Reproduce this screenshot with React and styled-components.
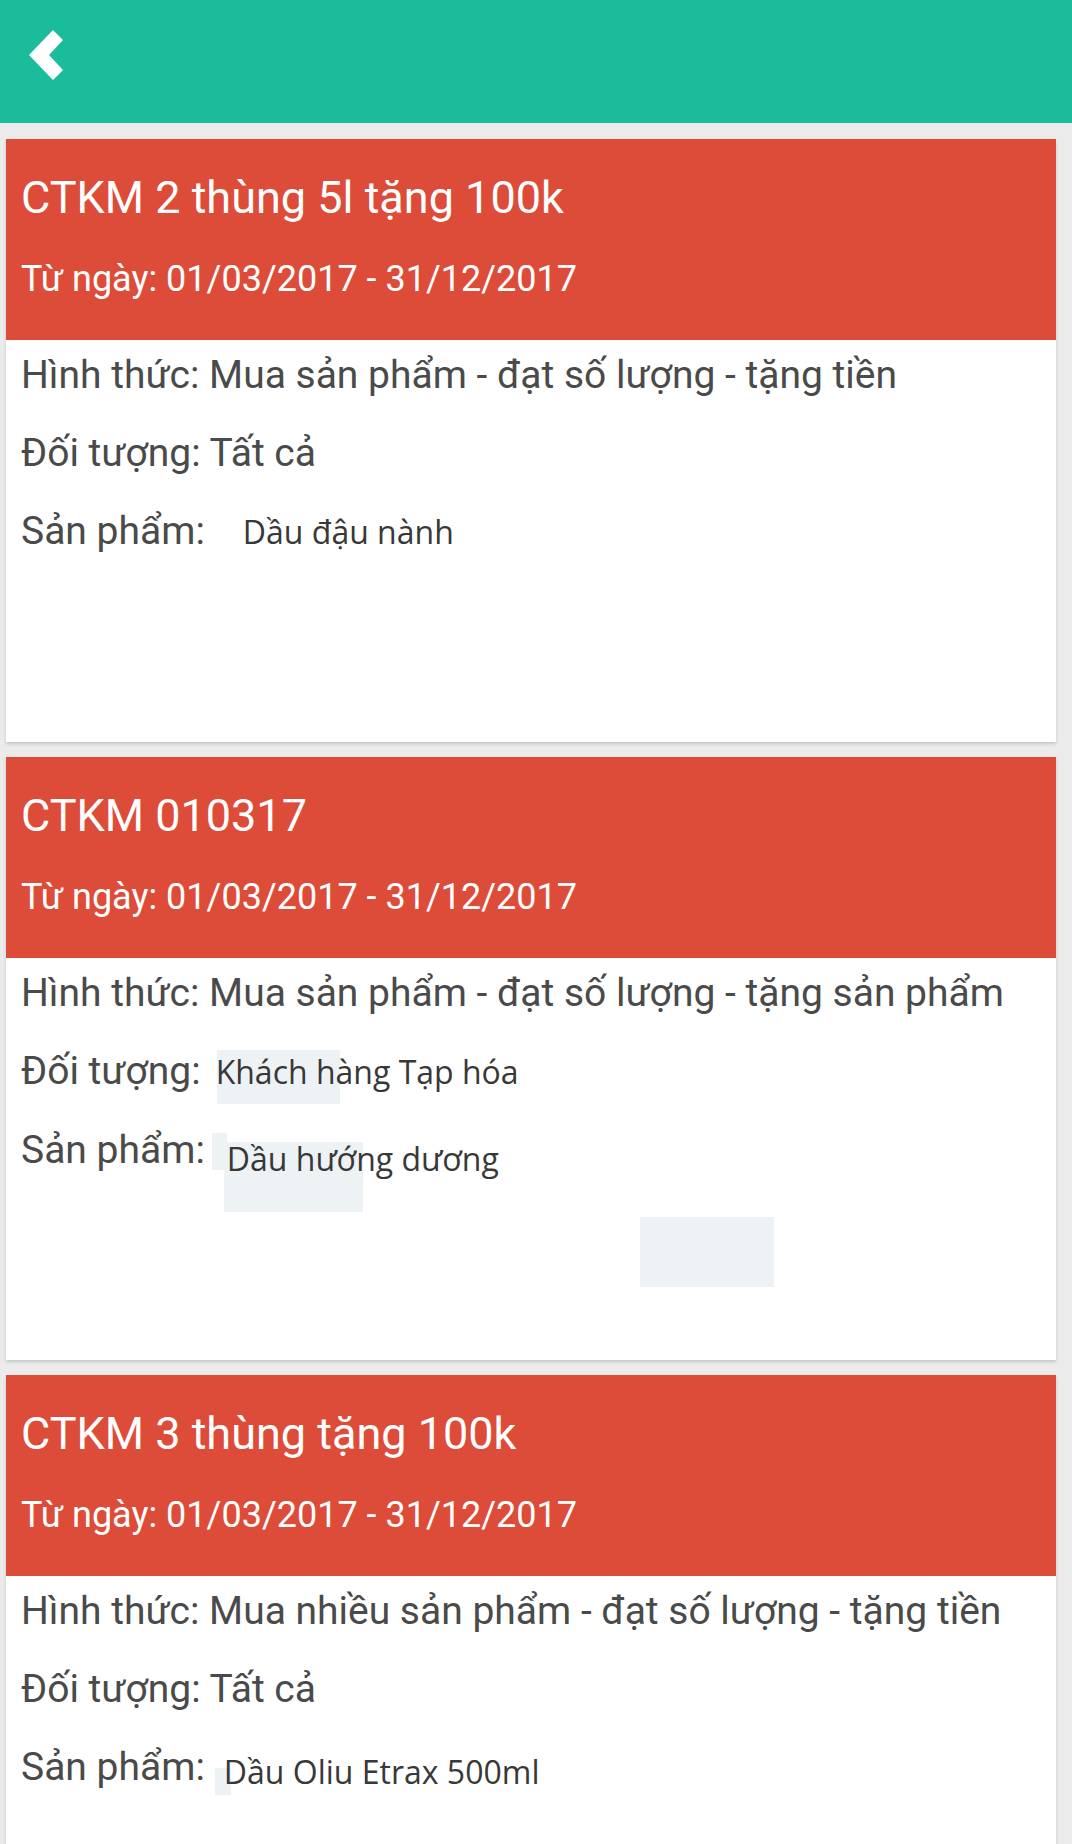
import React from 'react';
import styled, { createGlobalStyle } from 'styled-components';

const GlobalStyle = createGlobalStyle`
  html, body { margin: 0; padding: 0; }
  body {
    background: #ebebeb;
    font-family: Roboto, "Liberation Sans", sans-serif;
  }
`;

const Page = styled.div`
  width: 1072px;
  height: 1844px;
  background: #ebebeb;
  overflow: hidden;
`;

const TopBar = styled.header`
  height: 123px;
  background: #1bbc9b;
  display: flex;
  align-items: center;
  padding: 0 0 14px 29px;
  box-sizing: border-box;
`;

const BackButton = styled.button`
  border: 0;
  background: none;
  padding: 0;
  width: 34px;
  height: 50px;
  display: flex;
  cursor: pointer;
`;

const List = styled.div`
  display: flex;
  flex-direction: column;
  gap: 15px;
  padding: 16px 16px 0 6px;
`;

const Card = styled.section`
  position: relative;
  background: #fff;
  min-height: 603px;
  box-shadow: 0 2px 3px rgba(0, 0, 0, 0.16);
`;

const CardHead = styled.div`
  background: #dd4b39;
  color: #fff;
  height: 201px;
  box-sizing: border-box;
  padding: 33px 15px 0;
`;

const Title = styled.h2`
  margin: 0;
  font-weight: 400;
  font-size: 45px;
  line-height: 52px;
  white-space: nowrap;
`;

const Period = styled.div`
  margin-top: 33px;
  font-size: 36px;
  line-height: 44px;
  white-space: nowrap;
`;

const CardBody = styled.div`
  position: relative;
  z-index: 1;
  padding: 2px 15px 0;
  display: flex;
  flex-direction: column;
  gap: 12px;
`;

const Row = styled.div`
  display: flex;
  align-items: baseline;
  font-size: 39px;
  line-height: 66px;
  color: #4a4a4a;
  white-space: pre;
`;

const Value = styled.span`
  font-family: "Open Sans", "Liberation Sans", sans-serif;
  font-size: 32px;
  color: #383838;
  margin-left: ${({ gap }) => gap}px;
  position: relative;
  top: ${({ drop }) => drop || 0}px;
`;

const Mark = styled.div`
  position: absolute;
  z-index: 0;
  background: #edf2f5;
`;

const Chevron = () => (
  <svg width="34" height="50" viewBox="0 0 34 50">
    <polygon points="0,25 24,0 34,10 20,25 34,40 24,50" fill="#fff" />
  </svg>
);

const promos = [
  {
    title: 'CTKM 2 thùng 5l tặng 100k',
    kind: 'Mua sản phẩm - đạt số lượng - tặng tiền',
    target: 'Tất cả',
    product: 'Dầu đậu nành',
    productGap: 38,
    marks: [],
  },
  {
    title: 'CTKM 010317',
    kind: 'Mua sản phẩm - đạt số lượng - tặng sản phẩm',
    target: 'Khách hàng Tạp hóa',
    targetValue: true,
    product: 'Dầu hướng dương',
    productGap: 22,
    productDrop: 8,
    marks: [
      { left: 211, top: 293, width: 123, height: 54 },
      { left: 206, top: 376, width: 15, height: 37 },
      { left: 218, top: 385, width: 139, height: 70 },
      { left: 634, top: 460, width: 134, height: 70 },
    ],
  },
  {
    title: 'CTKM 3 thùng tặng 100k',
    kind: 'Mua nhiều sản phẩm - đạt số lượng - tặng tiền',
    target: 'Tất cả',
    product: 'Dầu Oliu Etrax 500ml',
    productGap: 19,
    productDrop: 4,
    marks: [{ left: 209, top: 393, width: 16, height: 27 }],
  },
];

const PromoCard = ({ promo }) => (
  <Card>
    <CardHead>
      <Title>{promo.title}</Title>
      <Period>Từ ngày: 01/03/2017 - 31/12/2017</Period>
    </CardHead>
    {promo.marks.map((m, idx) => (
      <Mark key={`mark${idx}`} style={{ left: m.left, top: m.top, width: m.width, height: m.height }} />
    ))}
    <CardBody>
      <Row>Hình thức: {promo.kind}</Row>
      {promo.targetValue ? (
        <Row>
          Đối tượng:
          <Value gap={15}>{promo.target}</Value>
        </Row>
      ) : (
        <Row>Đối tượng: {promo.target}</Row>
      )}
      <Row>
        Sản phẩm:
        <Value gap={promo.productGap} drop={promo.productDrop}>{promo.product}</Value>
      </Row>
    </CardBody>
  </Card>
);

const App = () => (
  <>
    <GlobalStyle />
    <Page>
      <TopBar>
        <BackButton aria-label="back">
          <Chevron />
        </BackButton>
      </TopBar>
      <List>
        {promos.map((p, idx) => (
          <PromoCard key={`promo${idx}`} promo={p} />
        ))}
      </List>
    </Page>
  </>
);

export default App;
